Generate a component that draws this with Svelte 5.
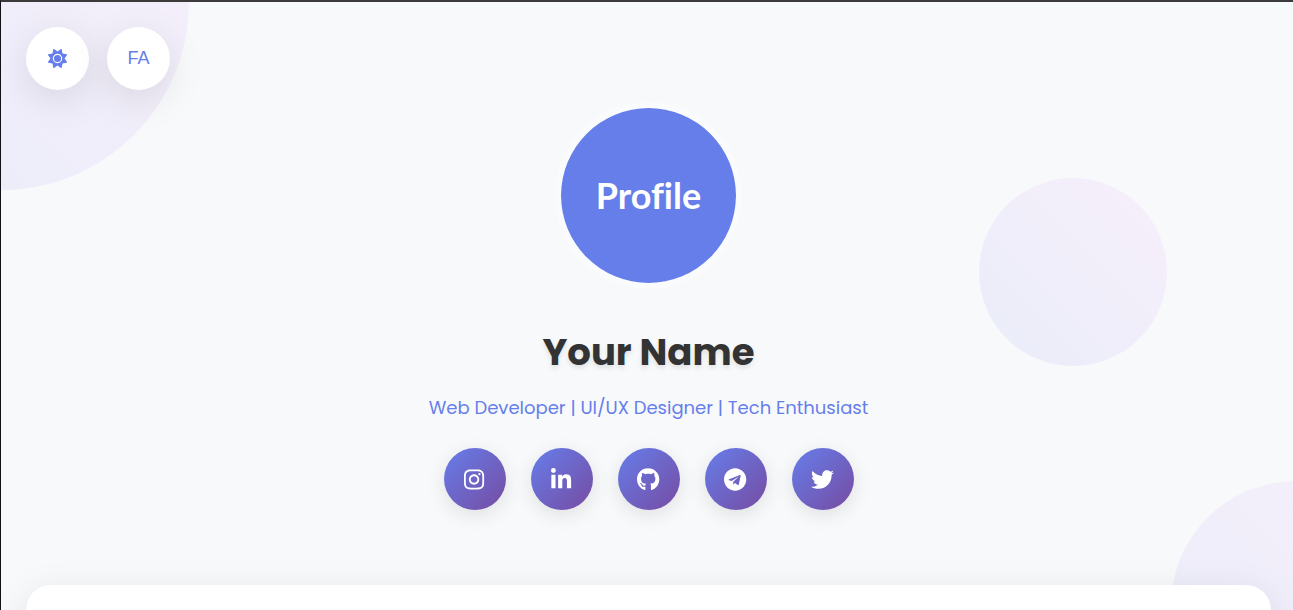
<script lang="ts">
  type Social = { name: string; viewBox: string; path: string };

  // UI state
  let lang = $state('en');
  let dark = $state(false);

  const sun =
    'M361.5 1.2c5 2.1 8.6 6.6 9.6 11.9L391 121l107.9 19.8c5.3 1 9.8 4.6 11.9 9.6s1.5 10.7-1.6 15.2L446.9 256l62.3 90.3c3.1 4.5 3.7 10.2 1.6 15.2s-6.6 8.6-11.9 9.6L391 391 371.1 498.9c-1 5.3-4.6 9.8-9.6 11.9s-10.7 1.5-15.2-1.6L256 446.9l-90.3 62.3c-4.5 3.1-10.2 3.7-15.2 1.6s-8.6-6.6-9.6-11.9L121 391 13.1 371.1c-5.3-1-9.8-4.6-11.9-9.6s-1.5-10.7 1.6-15.2L65.1 256 2.8 165.7c-3.1-4.5-3.7-10.2-1.6-15.2s6.6-8.6 11.9-9.6L121 121 140.9 13.1c1-5.3 4.6-9.8 9.6-11.9s10.7-1.5 15.2 1.6L256 65.1 346.3 2.8c4.5-3.1 10.2-3.7 15.2-1.6zM160 256a96 96 0 1 1 192 0 96 96 0 1 1 -192 0zm224 0a128 128 0 1 0 -256 0 128 128 0 1 0 256 0z';

  const socials: Social[] = [
    {
      name: 'Instagram',
      viewBox: '0 0 448 512',
      path: 'M224.1 141c-63.6 0-114.9 51.3-114.9 114.9s51.3 114.9 114.9 114.9S339 319.5 339 255.9 287.7 141 224.1 141zm0 189.6c-41.1 0-74.7-33.5-74.7-74.7s33.5-74.7 74.7-74.7 74.7 33.5 74.7 74.7-33.6 74.7-74.7 74.7zm146.4-194.3c0 14.9-12 26.8-26.8 26.8-14.9 0-26.8-12-26.8-26.8s12-26.8 26.8-26.8 26.8 12 26.8 26.8zm76.1 27.2c-1.7-35.9-9.9-67.7-36.2-93.9-26.2-26.2-58-34.4-93.9-36.2-37-2.1-147.9-2.1-184.9 0-35.8 1.7-67.6 9.9-93.9 36.1s-34.4 58-36.2 93.9c-2.1 37-2.1 147.9 0 184.9 1.7 35.9 9.9 67.7 36.2 93.9s58 34.4 93.9 36.2c37 2.1 147.9 2.1 184.9 0 35.9-1.7 67.7-9.9 93.9-36.2 26.2-26.2 34.4-58 36.2-93.9 2.1-37 2.1-147.8 0-184.8zM398.8 388c-7.8 19.6-22.9 34.7-42.6 42.6-29.5 11.7-99.5 9-132.1 9s-102.7 2.6-132.1-9c-19.6-7.8-34.7-22.9-42.6-42.6-11.7-29.5-9-99.5-9-132.1s-2.6-102.7 9-132.1c7.8-19.6 22.9-34.7 42.6-42.6 29.5-11.7 99.5-9 132.1-9s102.7-2.6 132.1 9c19.6 7.8 34.7 22.9 42.6 42.6 11.7 29.5 9 99.5 9 132.1s2.7 102.7-9 132.1z'
    },
    {
      name: 'LinkedIn',
      viewBox: '0 0 448 512',
      path: 'M100.28 448H7.4V148.9h92.88zM53.79 108.1C24.09 108.1 0 83.5 0 53.8a53.79 53.79 0 0 1 107.58 0c0 29.7-24.1 54.3-53.79 54.3zM447.9 448h-92.68V302.4c0-34.7-.7-79.2-48.29-79.2-48.29 0-55.69 37.7-55.69 76.7V448h-92.78V148.9h89.08v40.8h1.3c12.4-23.5 42.69-48.3 87.88-48.3 94 0 111.28 61.9 111.28 142.3V448z'
    },
    {
      name: 'GitHub',
      viewBox: '0 0 496 512',
      path: 'M165.9 397.4c0 2-2.3 3.6-5.2 3.6-3.3.3-5.6-1.3-5.6-3.6 0-2 2.3-3.6 5.2-3.6 3-.3 5.6 1.3 5.6 3.6zm-31.1-4.5c-.7 2 1.3 4.3 4.3 4.9 2.6 1 5.6 0 6.2-2s-1.3-4.3-4.3-5.2c-2.6-.7-5.5.3-6.2 2.3zm44.2-1.7c-2.9.7-4.9 2.6-4.6 4.9.3 2 2.9 3.3 5.9 2.6 2.9-.7 4.9-2.6 4.6-4.6-.3-1.9-3-3.2-5.9-2.9zM244.8 8C106.1 8 0 113.3 0 252c0 110.9 69.8 205.8 169.5 239.2 12.8 2.3 17.3-5.6 17.3-12.1 0-6.2-.3-40.4-.3-61.4 0 0-70 15-84.7-29.8 0 0-11.4-29.1-27.8-36.6 0 0-22.9-15.7 1.6-15.4 0 0 24.9 2 38.6 25.8 21.9 38.6 58.6 27.5 72.9 20.9 2.3-16 8.8-27.1 16-33.7-55.9-6.2-112.3-14.3-112.3-110.5 0-27.5 7.6-41.3 23.6-58.9-2.6-6.5-11.1-33.3 2.6-67.9 20.9-6.5 69 27 69 27 20-5.6 41.5-8.5 62.8-8.5s42.8 2.9 62.8 8.5c0 0 48.1-33.6 69-27 13.7 34.7 5.2 61.4 2.6 67.9 16 17.7 25.8 31.5 25.8 58.9 0 96.5-58.9 104.2-114.8 110.5 9.2 7.9 17 22.9 17 46.4 0 33.7-.3 75.4-.3 83.6 0 6.5 4.6 14.4 17.3 12.1C428.2 457.8 496 362.9 496 252 496 113.3 383.5 8 244.8 8z'
    },
    {
      name: 'Telegram',
      viewBox: '0 0 496 512',
      path: 'M248 8C111 8 0 119 0 256s111 248 248 248 248-111 248-248S385 8 248 8zm121.8 169.9l-40.7 191.8c-3 13.6-11.1 16.9-22.4 10.5l-62-45.7-29.9 28.8c-3.3 3.3-6.1 6.1-12.5 6.1l4.4-63.1 114.9-103.8c5-4.4-1.1-6.9-7.7-2.5l-142 89.4-61.2-19.1c-13.3-4.2-13.6-13.3 2.8-19.7l239.1-92.2c11.1-4 20.8 2.7 17.2 19.5z'
    },
    {
      name: 'Twitter',
      viewBox: '0 0 512 512',
      path: 'M459.37 151.716c.325 4.548.325 9.097.325 13.645 0 138.72-105.583 298.558-298.558 298.558-59.452 0-114.68-17.219-161.137-47.106 8.447.974 16.568 1.299 25.34 1.299 49.055 0 94.213-16.568 130.274-44.832-46.132-.975-84.792-31.188-98.112-72.772 6.498.974 12.995 1.624 19.818 1.624 9.421 0 18.843-1.3 27.614-3.573-48.081-9.747-84.143-51.98-84.143-102.985v-1.299c13.969 7.797 30.214 12.67 47.431 13.319-28.264-18.843-46.781-51.005-46.781-87.391 0-19.492 5.197-37.36 14.294-52.954 51.655 63.675 129.3 105.258 216.365 109.807-1.624-7.797-2.599-15.918-2.599-24.04 0-57.828 46.782-104.934 104.934-104.934 30.213 0 57.502 12.67 76.67 33.137 23.715-4.548 46.456-13.32 66.599-25.34-7.798 24.366-24.366 44.833-46.132 57.827 21.117-2.273 41.584-8.122 60.426-16.243-14.292 20.791-32.161 39.308-52.628 54.253z'
    }
  ];
</script>

<div class="page" class:dark>
  <!-- background shapes -->
  <div class="shape shape-1"></div>
  <div class="shape shape-2"></div>
  <div class="shape shape-3"></div>

  <div class="controls">
    <button class="control" aria-label="Toggle theme" onclick={() => (dark = !dark)}>
      <svg viewBox="0 0 512 512" aria-hidden="true"><path d={sun} /></svg>
    </button>
    <button class="control" onclick={() => (lang = lang === 'en' ? 'fa' : 'en')}>
      {lang === 'en' ? 'FA' : 'EN'}
    </button>
  </div>

  <header>
    <div class="avatar">Profile</div>
    <h1>Your Name</h1>
    <p class="tagline">Web Developer | UI/UX Designer | Tech Enthusiast</p>
    <nav class="socials">
      {#each socials as social}
        <a href="#{social.name.toLowerCase()}" aria-label={social.name}>
          <svg viewBox={social.viewBox} aria-hidden="true"><path d={social.path} /></svg>
        </a>
      {/each}
    </nav>
  </header>

  <main class="card"></main>
</div>

<style>
  :global(body) {
    margin: 0;
  }

  .page {
    position: relative;
    z-index: 0;
    display: flex;
    flex-direction: column;
    box-sizing: border-box;
    min-height: 100vh;
    padding: 25px 22px 0 25px;
    border-top: 2px solid #3c3a3b;
    border-left: 1px solid #131116;
    background: #f8f9fb;
    color: #333;
    font-family: Poppins, Inter, sans-serif;
    overflow: hidden;
  }

  .page.dark {
    background: #1a1a2e;
    color: #fff;
  }

  .shape {
    position: absolute;
    z-index: -1;
    border-radius: 50%;
    background: linear-gradient(45deg, #667eea, #f093fb);
    opacity: 0.1;
  }

  .shape-1 {
    top: -188px;
    left: -188px;
    width: 376px;
    height: 376px;
  }

  .shape-2 {
    top: 176px;
    right: 126px;
    width: 188px;
    height: 188px;
  }

  .shape-3 {
    right: -128px;
    bottom: -121px;
    width: 250px;
    height: 250px;
  }

  .controls {
    display: flex;
    gap: 18px;
  }

  .control {
    display: flex;
    align-items: center;
    justify-content: center;
    width: 63px;
    height: 63px;
    padding: 0;
    border: none;
    border-radius: 50%;
    background: #fff;
    color: #667eea;
    font-family: "Liberation Sans", Arial, sans-serif;
    font-size: 18px;
    box-shadow: 0 10px 38px rgba(0, 0, 0, 0.1);
    cursor: pointer;
  }

  .control svg {
    height: 19px;
    fill: currentColor;
  }

  header {
    display: flex;
    flex-direction: column;
    align-items: center;
    padding: 12px 0 75px;
    text-align: center;
  }

  .avatar {
    width: 175px;
    height: 175px;
    border: 6px solid rgba(255, 255, 255, 0.3);
    border-radius: 50%;
    background: #667eea;
    background-clip: padding-box;
    color: #fff;
    font-family: Lato, sans-serif;
    font-size: 36px;
    font-variant-ligatures: none;
    font-weight: 700;
    line-height: 174px;
  }

  h1 {
    margin: 31px 0 10px;
    font-size: 37px;
    font-weight: 700;
    line-height: 64px;
    text-shadow: 0 3px 5px rgba(0, 0, 0, 0.1);
  }

  .tagline {
    margin: 0 0 26px;
    color: #667eea;
    font-size: 18px;
    line-height: 28px;
  }

  .socials {
    display: flex;
    gap: 25px;
  }

  .socials a {
    display: flex;
    align-items: center;
    justify-content: center;
    width: 62px;
    height: 62px;
    border-radius: 50%;
    background: linear-gradient(135deg, #667eea, #764ba2);
    color: #fff;
    box-shadow: 0 5px 19px rgba(0, 0, 0, 0.1);
  }

  .socials svg {
    height: 23px;
    fill: currentColor;
  }

  /* runs on below the fold */
  .card {
    flex: 1 0 auto;
    min-height: 225px;
    margin-bottom: -200px;
    border-radius: 25px;
    background: #fff;
    box-shadow: 0 10px 38px rgba(0, 0, 0, 0.1);
  }
</style>
